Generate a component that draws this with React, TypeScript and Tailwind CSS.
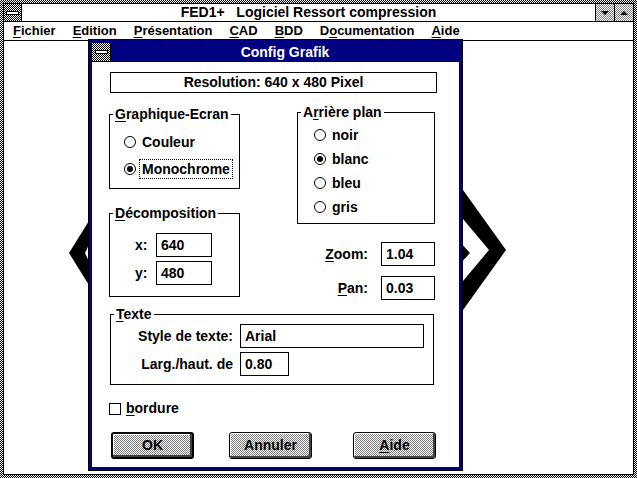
import type { ReactNode } from "react";

const dither =
  "bg-[repeating-conic-gradient(#000_0_25%,#fff_0_50%)] bg-size-[2px_2px]";
const lightDither =
  "bg-[repeating-conic-gradient(#808080_0_25%,#fff_0_50%)] bg-size-[2px_2px]";

function Radio({
  label,
  checked,
  focus,
}: {
  label: string;
  checked?: boolean;
  focus?: boolean;
}) {
  return (
    <div className="flex h-[20px] items-center gap-[6px]">
      <span className="flex h-[12px] w-[12px] items-center justify-center rounded-full border border-black bg-white">
        {checked && <span className="h-[6px] w-[6px] rounded-full bg-black" />}
      </span>
      <span
        className={
          focus
            ? "-ml-[3px] border border-dotted border-black px-[2px] leading-[18px]"
            : "leading-[18px]"
        }
      >
        {label}
      </span>
    </div>
  );
}

function Group({
  title,
  className,
  children,
}: {
  title: ReactNode;
  className: string;
  children: ReactNode;
}) {
  return (
    <div className={"relative border border-black " + className}>
      <span className="absolute -top-[10px] left-[3px] bg-white px-[2px] leading-[18px]">
        {title}
      </span>
      {children}
    </div>
  );
}

function Field({ value, className }: { value: string; className: string }) {
  return (
    <input
      readOnly
      value={value}
      className={
        "h-[24px] border border-black bg-white pl-[4px] outline-none " +
        className
      }
    />
  );
}

function Button({ children, main }: { children: ReactNode; main?: boolean }) {
  return (
    <button
      className={
        "flex h-[27px] w-[83px] items-center justify-center rounded-[3px] border-black shadow-[inset_-2px_-2px_0_#404040,inset_1px_1px_0_#fff] " +
        lightDither +
        (main ? " border-2" : " border")
      }
    >
      {children}
    </button>
  );
}

export default function App() {
  const menus: [string, string, string][] = [
    ["", "F", "ichier"],
    ["", "E", "dition"],
    ["", "P", "résentation"],
    ["", "C", "AD"],
    ["", "B", "DD"],
    ["D", "o", "cumentation"],
    ["", "A", "ide"],
  ];

  return (
    <div
      className={
        "relative h-[478px] w-[637px] overflow-hidden p-[3px] font-['Liberation_Sans',Arial,sans-serif] text-[14px] font-bold text-black " +
        dither
      }
    >
      {/* main window */}
      <div className="flex h-full flex-col border border-black bg-white">
        <div className="flex h-[18px] border-b border-black">
          <div
            className={
              "flex w-[18px] items-center justify-center border-r border-black " +
              dither
            }
          >
            <span className="h-[4px] w-[13px] border border-black bg-white" />
          </div>
          <div className="flex-1 text-center leading-[17px] whitespace-pre">
            FED1+   Logiciel Ressort compression
          </div>
          <div
            className={
              "flex w-[19px] items-center justify-center border-l border-black " +
              lightDither
            }
          >
            <span className="h-0 w-0 border-x-[4px] border-t-[4px] border-x-transparent border-t-black" />
          </div>
          <div
            className={
              "flex w-[19px] items-center justify-center border-l border-black " +
              lightDither
            }
          >
            <span className="h-0 w-0 border-x-[4px] border-b-[4px] border-x-transparent border-b-black" />
          </div>
        </div>
        <div className="flex h-[19px] items-center gap-[17px] border-b border-black pl-[9px] text-[13px] leading-[18px]">
          {menus.map(([a, u, b]) => (
            <span key={a + u + b}>
              {a}
              <u className="underline-offset-2">{u}</u>
              {b}
            </span>
          ))}
        </div>
        <div className="flex-1" />
      </div>

      {/* drawing behind the dialog */}
      <svg
        className="absolute left-0 top-0"
        width="637"
        height="478"
        viewBox="0 0 637 478"
      >
        <polygon points="92,216 69,253 92,290" fill="#000" />
        <polygon points="92,238 85,253 92,268" fill="#fff" />
        <polygon points="458,183 506,250 458,317" fill="#000" />
        <polygon points="458,213 489,250 458,287" fill="#fff" />
        <polygon points="458,240 470,253 458,266" fill="#000" />
      </svg>

      {/* dialog */}
      <div className="absolute left-[88px] top-[39px] flex h-[432px] w-[375px] flex-col border border-black bg-[#000080] p-[3px]">
        <div className="flex h-[19px] border-b border-black">
          <div
            className={
              "flex w-[19px] items-center justify-center border-r border-black " +
              dither
            }
          >
            <span className="h-[4px] w-[13px] border border-black bg-white" />
          </div>
          <div className="flex-1 text-center leading-[18px] text-white">
            Config Grafik
          </div>
        </div>

        <div className="flex flex-1 flex-col bg-white">
          <div className="ml-[18px] mt-[10px] flex h-[21px] w-[327px] items-center justify-center border border-black">
            Resolution: 640 x 480 Pixel
          </div>

          <div className="flex h-[221px] items-start">
            <div className="ml-[17px] mt-[21px] flex w-[131px] flex-col">
              <Group
                title={
                  <>
                    <u className="underline-offset-2">G</u>raphique-Ecran
                  </>
                }
                className="h-[75px] pl-[14px] pt-[17px]"
              >
                <div className="flex flex-col gap-[7px]">
                  <Radio label="Couleur" />
                  <Radio label="Monochrome" checked focus />
                </div>
              </Group>
              <Group
                title={
                  <>
                    <u className="underline-offset-2">D</u>écomposition
                  </>
                }
                className="mt-[24px] h-[84px] pl-[25px] pt-[19px]"
              >
                <div className="flex flex-col gap-[4px]">
                  <div className="flex items-center">
                    <span className="w-[21px]">x:</span>
                    <Field value="640" className="w-[56px]" />
                  </div>
                  <div className="flex items-center">
                    <span className="w-[21px]">y:</span>
                    <Field value="480" className="w-[56px]" />
                  </div>
                </div>
              </Group>
            </div>

            <div className="ml-[57px] mt-[19px] flex w-[138px] flex-col">
              <Group
                title={
                  <>
                    A<u className="underline-offset-2">r</u>rière plan
                  </>
                }
                className="h-[112px] pl-[16px] pt-[12px]"
              >
                <div className="flex flex-col gap-[4px]">
                  <Radio label="noir" />
                  <Radio label="blanc" checked />
                  <Radio label="bleu" />
                  <Radio label="gris" />
                </div>
              </Group>
              <div className="mt-[18px] flex flex-col gap-[10px]">
                <div className="flex items-center justify-end gap-[13px]">
                  <span>
                    <u className="underline-offset-2">Z</u>oom:
                  </span>
                  <Field value="1.04" className="w-[54px]" />
                </div>
                <div className="flex items-center justify-end gap-[13px]">
                  <span>
                    <u className="underline-offset-2">P</u>an:
                  </span>
                  <Field value="0.03" className="w-[54px]" />
                </div>
              </div>
            </div>
          </div>

          <Group
            title={
              <>
                <u className="underline-offset-2">T</u>exte
              </>
            }
            className="ml-[18px] h-[71px] w-[324px] pt-[9px]"
          >
            <div className="flex flex-col gap-[4px]">
              <div className="flex items-center gap-[7px]">
                <span className="w-[122px] text-right">Style de texte:</span>
                <Field value="Arial" className="w-[184px]" />
              </div>
              <div className="flex items-center gap-[7px]">
                <span className="w-[122px] text-right">Larg./haut. de</span>
                <Field value="0.80" className="w-[49px]" />
              </div>
            </div>
          </Group>

          <div className="ml-[17px] mt-[17px] flex items-center gap-[5px] leading-[13px]">
            <span className="h-[12px] w-[12px] border border-black bg-white" />
            <span>
              <u className="underline-offset-2">b</u>ordure
            </span>
          </div>

          <div className="ml-[19px] mt-[17px] flex">
            <Button main>OK</Button>
            <div className="ml-[35px]">
              <Button>Annuler</Button>
            </div>
            <div className="ml-[41px]">
              <Button>
                <span>
                  <u className="underline-offset-2">A</u>ide
                </span>
              </Button>
            </div>
          </div>
        </div>
      </div>
    </div>
  );
}
